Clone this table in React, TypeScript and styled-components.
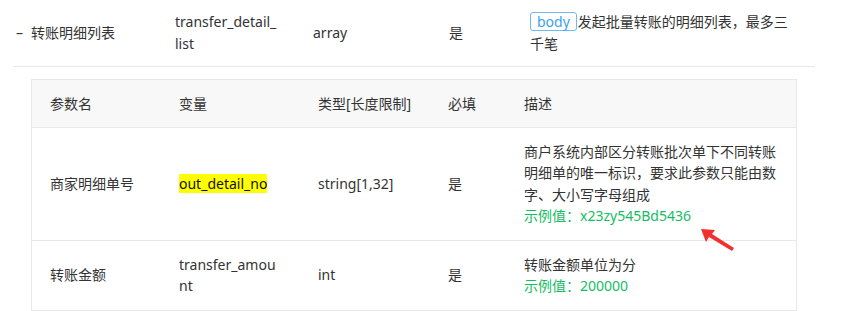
import React from 'react';
import styled, { createGlobalStyle } from 'styled-components';

const GlobalStyle = createGlobalStyle`
  html, body {
    margin: 0;
    padding: 0;
    background: #fff;
  }
  body {
    font-family: "Noto Sans", "Noto Sans CJK SC", sans-serif;
    font-size: 14px;
    color: #333;
  }
`;

const Page = styled.div`
  position: relative;
  width: 852px;
  height: 311px;
  overflow: hidden;
`;

const ParentRow = styled.div`
  display: grid;
  grid-template-columns: 159px 138px 136px 81px 262px;
  margin-left: 13px;
  width: 799px;
  padding: 11px 0 12px 3px;
  border-bottom: 1px solid #e8e8e8;
  line-height: 21.5px;
  align-items: center;
`;

const Cell = styled.div<{ $wrap?: number }>`
  max-width: ${(p) => (p.$wrap ? `${p.$wrap}px` : 'none')};
  word-break: break-all;
`;

const Toggle = styled.span`
  display: inline-block;
  width: 15px;
`;

const BodyTag = styled.span`
  display: inline-block;
  box-sizing: border-box;
  height: 19px;
  padding: 0 6px;
  margin-right: 1px;
  border: 1px solid #6cbcf2;
  border-radius: 3px;
  color: #3d9ff0;
  line-height: 17px;
  font-size: 14px;
  vertical-align: top;
  margin-top: 1px;
`;

const SubTable = styled.div`
  margin: 12px 0 0 31px;
  width: 764px;
  border: 1px solid #e8e8e8;
  border-bottom: none;
`;

const SubRow = styled.div<{ $head?: boolean }>`
  display: grid;
  grid-template-columns: 129px 139px 130px 76px 262px;
  padding: ${(p) => (p.$head ? '13px 0 12px 18px' : '13px 0 13px 18px')};
  background: ${(p) => (p.$head ? '#f8f8f8' : '#fff')};
  border-bottom: 1px solid #e8e8e8;
  line-height: 21.5px;
  align-items: center;
`;

const Highlight = styled.span`
  background: #ffff00;
  color: #111;
`;

const Example = styled.div`
  color: #14bd63;
`;

const Arrow = styled.svg`
  position: absolute;
  left: 696px;
  top: 224px;
`;

type Param = {
  name: string;
  field: React.ReactNode;
  type: string;
  required: string;
  desc: string;
  example: string;
};

const params: Param[] = [
  {
    name: '商家明细单号',
    field: <Highlight>out_detail_no</Highlight>,
    type: 'string[1,32]',
    required: '是',
    desc: '商户系统内部区分转账批次单下不同转账明细单的唯一标识，要求此参数只能由数字、大小写字母组成',
    example: 'x23zy545Bd5436',
  },
  {
    name: '转账金额',
    field: 'transfer_amount',
    type: 'int',
    required: '是',
    desc: '转账金额单位为分',
    example: '200000',
  },
];

export default function App() {
  return (
    <Page>
      <GlobalStyle />
      <ParentRow>
        <Cell>
          <Toggle>–</Toggle>转账明细列表
        </Cell>
        <Cell $wrap={103}>transfer_detail_list</Cell>
        <Cell>array</Cell>
        <Cell>是</Cell>
        <Cell>
          <BodyTag>body</BodyTag>发起批量转账的明细列表，最多三千笔
        </Cell>
      </ParentRow>

      <SubTable>
        <SubRow $head>
          <Cell>参数名</Cell>
          <Cell>变量</Cell>
          <Cell>类型[长度限制]</Cell>
          <Cell>必填</Cell>
          <Cell>描述</Cell>
        </SubRow>
        {params.map((p) => (
          <SubRow key={p.name}>
            <Cell>{p.name}</Cell>
            <Cell $wrap={99}>{p.field}</Cell>
            <Cell>{p.type}</Cell>
            <Cell>{p.required}</Cell>
            <Cell>
              <div>{p.desc}</div>
              <Example>示例值：{p.example}</Example>
            </Cell>
          </SubRow>
        ))}
      </SubTable>

      <Arrow width="44" height="30" viewBox="0 0 44 30">
        <polygon points="5,5 19,6 16,10 38,24 36,27 13,13 10,18" fill="#f2302e" />
      </Arrow>
    </Page>
  );
}
